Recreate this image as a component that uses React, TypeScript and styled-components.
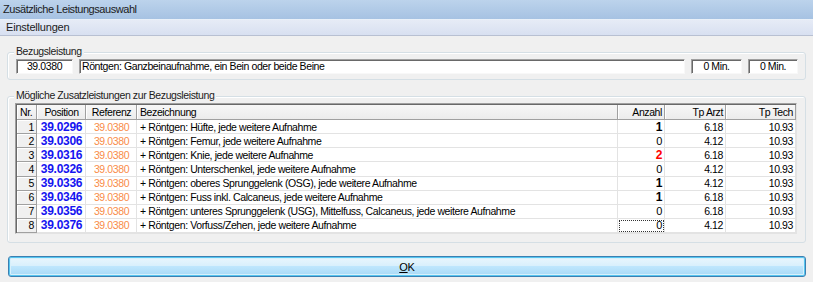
import React from 'react'
import styled, { createGlobalStyle, css } from 'styled-components'

type Row = {
  nr: number
  position: string
  text: string
  anzahl: number
  arzt: string
  tech: string
}

const ROWS: Row[] = [
  { nr: 1, position: '39.0296', text: '+ Röntgen: Hüfte, jede weitere Aufnahme', anzahl: 1, arzt: '6.18', tech: '10.93' },
  { nr: 2, position: '39.0306', text: '+ Röntgen: Femur, jede weitere Aufnahme', anzahl: 0, arzt: '4.12', tech: '10.93' },
  { nr: 3, position: '39.0316', text: '+ Röntgen: Knie, jede weitere Aufnahme', anzahl: 2, arzt: '6.18', tech: '10.93' },
  { nr: 4, position: '39.0326', text: '+ Röntgen: Unterschenkel, jede weitere Aufnahme', anzahl: 0, arzt: '4.12', tech: '10.93' },
  { nr: 5, position: '39.0336', text: '+ Röntgen: oberes Sprunggelenk (OSG), jede weitere Aufnahme', anzahl: 1, arzt: '4.12', tech: '10.93' },
  { nr: 6, position: '39.0346', text: '+ Röntgen: Fuss inkl. Calcaneus, jede weitere Aufnahme', anzahl: 1, arzt: '6.18', tech: '10.93' },
  { nr: 7, position: '39.0356', text: '+ Röntgen: unteres Sprunggelenk (USG), Mittelfuss, Calcaneus, jede weitere Aufnahme', anzahl: 0, arzt: '6.18', tech: '10.93' },
  { nr: 8, position: '39.0376', text: '+ Röntgen: Vorfuss/Zehen, jede weitere Aufnahme', anzahl: 0, arzt: '4.12', tech: '10.93' },
]

const COLUMNS = '20px 49px 51px 481px 47px 61px 1fr'

export default function App() {
  return (
    <>
      <Global />
      <S.Window>
        <S.TitleBar>Zusätzliche Leistungsauswahl</S.TitleBar>
        <S.MenuBar>
          <span>Einstellungen</span>
        </S.MenuBar>
        <S.Content>
          <S.Group>
            <S.Legend>Bezugsleistung</S.Legend>
            <S.FieldRow>
              <S.Field width="57px" align="center">39.0380</S.Field>
              <S.Field grow>Röntgen: Ganzbeinaufnahme, ein Bein oder beide Beine</S.Field>
              <S.Field width="51px" align="center">0 Min.</S.Field>
              <S.Field width="50px" align="center">0 Min.</S.Field>
            </S.FieldRow>
          </S.Group>

          <S.Group tall>
            <S.Legend>Mögliche Zusatzleistungen zur Bezugsleistung</S.Legend>
            <S.Grid>
              <S.Head align="left">Nr.</S.Head>
              <S.Head align="center">Position</S.Head>
              <S.Head align="center">Referenz</S.Head>
              <S.Head align="left">Bezeichnung</S.Head>
              <S.Head align="right">Anzahl</S.Head>
              <S.Head align="right">Tp Arzt</S.Head>
              <S.Head align="right">Tp Tech</S.Head>
              {ROWS.map((r) => (
                <React.Fragment key={r.nr}>
                  <S.NrCell>{r.nr}</S.NrCell>
                  <S.Cell align="center">
                    <S.Position>{r.position}</S.Position>
                  </S.Cell>
                  <S.Cell align="center">
                    <S.Reference>39.0380</S.Reference>
                  </S.Cell>
                  <S.Cell align="left">{r.text}</S.Cell>
                  <S.Cell align="right" focused={r.nr === 8}>
                    <S.Count value={r.anzahl}>{r.anzahl}</S.Count>
                  </S.Cell>
                  <S.Cell align="right">{r.arzt}</S.Cell>
                  <S.Cell align="right">{r.tech}</S.Cell>
                </React.Fragment>
              ))}
            </S.Grid>
          </S.Group>

          <S.OkButton>
            <u>O</u>K
          </S.OkButton>
        </S.Content>
      </S.Window>
    </>
  )
}

const Global = createGlobalStyle`
  html, body {
    margin: 0;
    padding: 0;
    background: #f0f0f0;
  }
  body {
    font-family: 'Liberation Sans', Arial, sans-serif;
    font-size: 10.5px;
    letter-spacing: -0.4px;
    color: #000;
  }
`

type Align = 'left' | 'center' | 'right'

const S = {
  Window: styled.div`
    width: 813px;
    height: 282px;
    display: flex;
    flex-direction: column;
    background: #f0f0f0;
    overflow: hidden;
  `,

  TitleBar: styled.div`
    height: 19px;
    line-height: 19px;
    padding-left: 3px;
    font-size: 11px;
    letter-spacing: -0.45px;
    color: #1b1b1b;
    background: linear-gradient(#bcd3ec, #a6c2e2);
    border-bottom: 1px solid #e9f0f8;
  `,

  MenuBar: styled.div`
    height: 15px;
    line-height: 15px;
    padding-left: 6px;
    font-size: 11px;
    letter-spacing: -0.2px;
    color: #1b1b1b;
    background: linear-gradient(#e6ebf6, #d8e0f1);
    border-bottom: 1px solid #b8c0d2;
  `,

  Content: styled.div`
    display: flex;
    flex-direction: column;
    padding: 0 7px;
  `,

  Group: styled.div<{ tall?: boolean }>`
    position: relative;
    margin-top: 16px;
    height: ${(p) => (p.tall ? '147px' : '28px')};
    box-sizing: border-box;
    border: 1px solid #d5dfe5;
    border-radius: 3px;
    box-shadow: inset 1px 1px 0 #fff;
    padding: ${(p) => (p.tall ? '6px 8px 0 7px' : '6px 7px 0 8px')};
  `,

  Legend: styled.span`
    position: absolute;
    top: -8px;
    left: 6px;
    padding: 0 2px;
    line-height: 13px;
    background: #f0f0f0;
    color: #1b1b1b;
  `,

  FieldRow: styled.div`
    display: flex;
    gap: 6px;
  `,

  Field: styled.div<{ width?: string; grow?: boolean; align?: Align }>`
    box-sizing: border-box;
    height: 15px;
    line-height: 13px;
    ${(p) => (p.grow ? 'flex: 1;' : `width: ${p.width};`)}
    text-align: ${(p) => p.align ?? 'left'};
    padding: 0 2px;
    background: #fff;
    border: 1px solid;
    border-color: #a0a0a0 #f8f8f8 #f8f8f8 #a0a0a0;
    box-shadow: inset 1px 1px 0 #696969;
    white-space: nowrap;
    overflow: hidden;
  `,

  Grid: styled.div`
    box-sizing: border-box;
    height: 131px;
    display: grid;
    grid-template-columns: ${COLUMNS};
    grid-template-rows: 15px repeat(8, 1fr);
    background: #fff;
    border: 1px solid;
    border-color: #a0a0a0 #e3e3e3 #e3e3e3 #a0a0a0;
    box-shadow: inset 1px 1px 0 #696969;
    padding: 1px 0 0 1px;
  `,

  Head: styled.div<{ align: Align }>`
    box-sizing: border-box;
    line-height: 14px;
    padding: 0 2px 0 3px;
    text-align: ${(p) => p.align};
    background: linear-gradient(#f7f7f7, #ececec);
    border-right: 1px solid #a0a0a0;
    border-bottom: 1px solid #a0a0a0;
    box-shadow: inset 1px 0 0 #fff;
    white-space: nowrap;
    overflow: hidden;
  `,

  NrCell: styled.div`
    box-sizing: border-box;
    display: flex;
    align-items: center;
    justify-content: flex-end;
    padding-right: 2px;
    background: #f0f0f0;
    border-right: 1px solid #a0a0a0;
    border-bottom: 1px solid #a0a0a0;
    box-shadow: inset 1px 1px 0 #fff;
  `,

  Cell: styled.div<{ align: Align; focused?: boolean }>`
    box-sizing: border-box;
    display: flex;
    align-items: center;
    justify-content: ${(p) =>
      p.align === 'left' ? 'flex-start' : p.align === 'center' ? 'center' : 'flex-end'};
    padding: 0 2px 0 3px;
    border-right: 1px solid #e3e3e3;
    border-bottom: 1px solid #e3e3e3;
    white-space: nowrap;
    overflow: hidden;
    ${(p) =>
      p.focused &&
      css`
        outline: 1px dotted #333;
        outline-offset: -2px;
      `}
  `,

  Position: styled.span`
    font-weight: bold;
    color: #1414f0;
    font-size: 12px;
    letter-spacing: -0.3px;
  `,

  Reference: styled.span`
    color: #f98c48;
  `,

  Count: styled.span<{ value: number }>`
    font-weight: ${(p) => (p.value > 0 ? 'bold' : 'normal')};
    font-size: ${(p) => (p.value > 0 ? '12px' : '11px')};
    color: ${(p) => (p.value > 1 ? '#ff0000' : '#000')};
  `,

  OkButton: styled.button`
    margin: 13px 0 0 1px;
    height: 21px;
    box-sizing: border-box;
    font-family: inherit;
    font-size: 11px;
    letter-spacing: -0.2px;
    color: #000;
    border: 1px solid #3c7fb1;
    border-radius: 3px;
    box-shadow: 0 0 0 1px #56c6f0 inset, inset 0 0 0 2px #d8f0fb;
    background: linear-gradient(#eaf6fd 0%, #d9f0fc 45%, #bee6fd 50%, #a7d9f5 100%);
    padding: 0;
  `,
}
